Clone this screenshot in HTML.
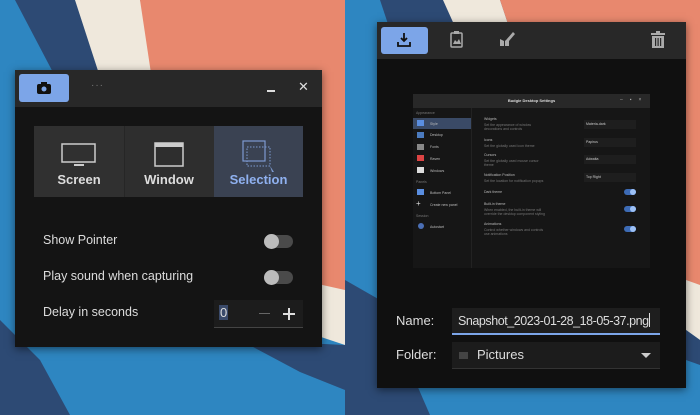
<!DOCTYPE html>
<html><head><meta charset="utf-8"><style>
*{margin:0;padding:0;box-sizing:border-box}
body{width:700px;height:415px;overflow:hidden;position:relative;font-family:"Liberation Sans",sans-serif;background:#2e86c1}
.a{position:absolute}
.t{color:#dcdcdc;font-size:12.5px}
.tog{position:absolute;width:29px;height:13px;border-radius:7px;background:#4a4a4a}
.tog::after{content:"";position:absolute;left:0;top:-1px;width:15px;height:15px;border-radius:50%;background:#bcbcbc}
.pt{position:absolute;font-size:3.5px;color:#bbb;white-space:nowrap}
.pt.s{color:#777}
.dd{position:absolute;left:584px;width:52px;height:9px;background:#1e1e1e;font-size:3.5px;color:#ccc;padding:2px}
.tg{position:absolute;left:624px;width:12px;height:6px;border-radius:3px;background:#3d6bb5}
.tg::after{content:"";position:absolute;right:0;top:0;width:6px;height:6px;border-radius:50%;background:#9cc0f5}
</style></head><body>
<svg class="a" style="left:0;top:0" width="700" height="415">
<rect x="0" y="0" width="345" height="415" fill="#2e86c1"/>
<polygon points="15,0 75,0 160,200 120,200" fill="#2d4a74"/>
<polygon points="75,0 140,0 200,200 140,200" fill="#efe8dc"/>
<polygon points="140,0 345,0 345,300 170,200" fill="#e8886e"/>
<polygon points="300,280 345,290 345,345 300,330" fill="#efe8dc"/>
<polygon points="240,340 345,345 345,390 300,372" fill="#2d4a74"/>
<polygon points="0,320 40,360 70,415 0,415" fill="#2d4a74"/>
<rect x="345" y="0" width="355" height="415" fill="#2e86c1"/>
<polygon points="380,0 443,0 480,60 400,60" fill="#2d4a74"/>
<polygon points="443,0 500,0 520,60 470,60" fill="#efe8dc"/>
<polygon points="500,0 700,0 700,300 520,60" fill="#e8886e"/>
<polygon points="686,280 700,285 700,340 686,330" fill="#efe8dc"/>
<polygon points="686,330 700,340 700,365 686,360" fill="#2d4a74"/>
<polygon points="345,280 380,300 430,415 345,415" fill="#2d4a74"/>
</svg>

<div class="a" style="left:15px;top:70px;width:307px;height:277px;background:#141414;box-shadow:0 2px 8px rgba(0,0,0,.5)"></div>
<div class="a" style="left:15px;top:70px;width:307px;height:37px;background:#282828"></div>
<div class="a" style="left:19px;top:74px;width:50px;height:28px;background:#7ca5e8;border-radius:3px"></div>
<svg class="a" style="left:37px;top:82px" width="14" height="12"><rect x="0" y="2" width="14" height="10" rx="2" fill="#111"/><rect x="4" y="0" width="6" height="3" fill="#111"/><circle cx="7" cy="7" r="2.5" fill="#7ca5e8"/></svg>
<div class="a" style="left:91px;top:80px;color:#777;font-size:10px;letter-spacing:1px">···</div>
<div class="a" style="left:267px;top:90px;width:8px;height:2px;background:#ddd"></div>
<div class="a" style="left:298px;top:79px;color:#ddd;font-size:13px">✕</div>

<div class="a" style="left:34px;top:126px;width:90px;height:71px;background:#303030"></div>
<div class="a" style="left:124px;top:126px;width:90px;height:71px;background:#2e2e2e;border-left:1px solid #262626"></div>
<div class="a" style="left:214px;top:126px;width:89px;height:71px;background:#3a4252"></div>
<svg class="a" style="left:34px;top:126px" width="269" height="71" fill="none">
<rect x="28" y="18" width="33" height="18" stroke="#ccc" stroke-width="1.5"/><rect x="40" y="38" width="10" height="2" fill="#ccc"/>
<rect x="121" y="17" width="28" height="23" stroke="#ccc" stroke-width="1.5"/><rect x="121" y="17" width="28" height="4" fill="#ccc"/>
<rect x="209" y="15" width="22" height="20" stroke="#7c9ad0" stroke-width="1.2"/><rect x="213" y="21" width="23" height="19" stroke="#7c9ad0" stroke-width="1" stroke-dasharray="1.5 1.5"/><path d="M236 40l4 6l-2 0z" fill="#7c9ad0"/>
</svg>
<div class="a" style="left:34px;top:172px;width:90px;text-align:center;color:#ddd;font-size:13px;font-weight:bold">Screen</div>
<div class="a" style="left:124px;top:172px;width:90px;text-align:center;color:#ddd;font-size:13px;font-weight:bold">Window</div>
<div class="a" style="left:214px;top:172px;width:89px;text-align:center;color:#8fb1f0;font-size:13px;font-weight:bold">Selection</div>

<div class="a t" style="left:43px;top:233px">Show Pointer</div>
<div class="a t" style="left:43px;top:269px">Play sound when capturing</div>
<div class="a t" style="left:43px;top:305px">Delay in seconds</div>
<div class="tog" style="left:264px;top:235px"></div>
<div class="tog" style="left:264px;top:271px"></div>
<div class="a" style="left:214px;top:300px;width:89px;height:28px;background:#1c1c1c;border-bottom:1px solid #444"></div>
<div class="a" style="left:219px;top:305px;background:#3a4a6a;color:#ddd;font-size:13px;padding:0 1px">0</div>
<div class="a" style="left:259px;top:313px;width:11px;height:1px;background:#666"></div>
<div class="a" style="left:283px;top:313px;width:12px;height:2px;background:#ddd"></div>
<div class="a" style="left:288px;top:308px;width:2px;height:12px;background:#ddd"></div>

<div class="a" style="left:377px;top:22px;width:309px;height:366px;background:#101010;box-shadow:0 2px 8px rgba(0,0,0,.5)"></div>
<div class="a" style="left:377px;top:22px;width:309px;height:37px;background:#282828"></div>
<div class="a" style="left:381px;top:27px;width:47px;height:27px;background:#7ca5e8;border-radius:3px"></div>
<svg class="a" style="left:396px;top:32px" width="16" height="16" fill="none" stroke="#111" stroke-width="1.8"><path d="M8 1v8M5 6l3 3l3-3M2 10v4h12v-4"/></svg>
<svg class="a" style="left:450px;top:31px" width="13" height="17"><rect x="1" y="2" width="11" height="14" rx="1" fill="none" stroke="#aaa" stroke-width="1.5"/><rect x="4" y="0" width="5" height="3" fill="#aaa"/><path d="M3 13l2-4l2 2l2-3l2 5z" fill="#aaa"/></svg>
<svg class="a" style="left:499px;top:30px" width="16" height="17"><path d="M1 16v-7l4 2l0 5z M6 16l0-5l4-4v9z" fill="#aaa"/><path d="M8 9l6-7l2 2l-6 7z" fill="#aaa"/></svg>
<svg class="a" style="left:651px;top:31px" width="14" height="17" fill="#aaa"><rect x="0" y="2" width="14" height="2"/><rect x="5" y="0" width="4" height="2"/><path d="M1 5h12v12h-12z" /><rect x="4" y="7" width="1.2" height="8" fill="#282828"/><rect x="6.5" y="7" width="1.2" height="8" fill="#282828"/><rect x="9" y="7" width="1.2" height="8" fill="#282828"/></svg>

<div class="a" style="left:413px;top:94px;width:237px;height:174px;background:#161616"></div>
<div class="a" style="left:413px;top:94px;width:237px;height:14px;background:#282828;color:#ddd;font-size:4px;text-align:center;line-height:14px;font-weight:bold">Budgie Desktop Settings</div>
<div class="a" style="left:620px;top:97px;color:#aaa;font-size:5px;letter-spacing:7px">–▪×</div>
<div class="a" style="left:471px;top:108px;width:1px;height:160px;background:#222"></div>
<div class="a" style="left:413px;top:118px;width:58px;height:11px;background:#3a4a66"></div>
<div class="pt s" style="left:416px;top:111px">Appearance</div>
<div class="a" style="left:417px;top:120px;width:7px;height:6px;background:#5a8ee0"></div><div class="pt" style="left:430px;top:122px">Style</div>
<div class="a" style="left:417px;top:132px;width:7px;height:6px;background:#4b7bbf"></div><div class="pt" style="left:430px;top:133px">Desktop</div>
<div class="a" style="left:417px;top:144px;width:7px;height:6px;background:#888"></div><div class="pt" style="left:430px;top:145px">Fonts</div>
<div class="a" style="left:417px;top:155px;width:7px;height:6px;background:#d44"></div><div class="pt" style="left:430px;top:157px">Raven</div>
<div class="a" style="left:417px;top:167px;width:7px;height:6px;background:#ddd"></div><div class="pt" style="left:430px;top:169px">Windows</div>
<div class="pt s" style="left:416px;top:180px">Panels</div>
<div class="a" style="left:417px;top:189px;width:7px;height:6px;background:#5a8ee0"></div><div class="pt" style="left:430px;top:191px">Bottom Panel</div>
<div class="pt" style="left:416px;top:199px;font-size:8px;color:#ddd">+</div><div class="pt" style="left:430px;top:203px">Create new panel</div>
<div class="pt s" style="left:416px;top:214px">Session</div>
<div class="a" style="left:418px;top:223px;width:6px;height:6px;border-radius:50%;background:#4b6fb5"></div><div class="pt" style="left:430px;top:225px">Autostart</div>
<div class="pt" style="left:484px;top:117px">Widgets</div><div class="pt s" style="left:484px;top:123px">Set the appearance of window<br>decorations and controls</div>
<div class="pt" style="left:484px;top:138px">Icons</div><div class="pt s" style="left:484px;top:144px">Set the globally used icon theme</div>
<div class="pt" style="left:484px;top:153px">Cursors</div><div class="pt s" style="left:484px;top:159px">Set the globally used mouse cursor<br>theme</div>
<div class="pt" style="left:484px;top:173px">Notification Position</div><div class="pt s" style="left:484px;top:179px">Set the location for notification popups</div>
<div class="pt" style="left:484px;top:190px">Dark theme</div>
<div class="pt" style="left:484px;top:202px">Built-in theme</div><div class="pt s" style="left:484px;top:208px">When enabled, the built-in theme will<br>override the desktop component styling</div>
<div class="pt" style="left:484px;top:222px">Animations</div><div class="pt s" style="left:484px;top:228px">Control whether windows and controls<br>use animations</div>
<div class="dd" style="top:120px">Materia-dark</div>
<div class="dd" style="top:138px">Papirus</div>
<div class="dd" style="top:155px">Adwaita</div>
<div class="dd" style="top:173px">Top Right</div>
<div class="tg" style="top:189px"></div>
<div class="tg" style="top:206px"></div>
<div class="tg" style="top:226px"></div>

<div class="a" style="left:396px;top:313px;color:#ddd;font-size:13px">Name:</div>
<div class="a" style="left:452px;top:308px;width:208px;height:27px;background:#1e1e1e;border-bottom:2px solid #7ca5e8;color:#ddd;font-size:12.5px;letter-spacing:-0.45px;padding:5px 0 0 6px;white-space:nowrap;overflow:hidden">Snapshot_2023-01-28_18-05-37.png<span style="display:inline-block;width:1px;height:14px;background:#ddd;vertical-align:-2px"></span></div>
<div class="a" style="left:396px;top:347px;color:#ddd;font-size:13px">Folder:</div>
<div class="a" style="left:452px;top:342px;width:208px;height:27px;background:#1c1c1c;border-bottom:1px solid #333"></div>
<div class="a" style="left:459px;top:352px;width:9px;height:7px;background:#444"></div>
<div class="a" style="left:477px;top:347px;color:#ddd;font-size:13px">Pictures</div>
<div class="a" style="left:641px;top:353px;width:0;height:0;border-left:5px solid transparent;border-right:5px solid transparent;border-top:5px solid #ccc"></div>
</body></html>
